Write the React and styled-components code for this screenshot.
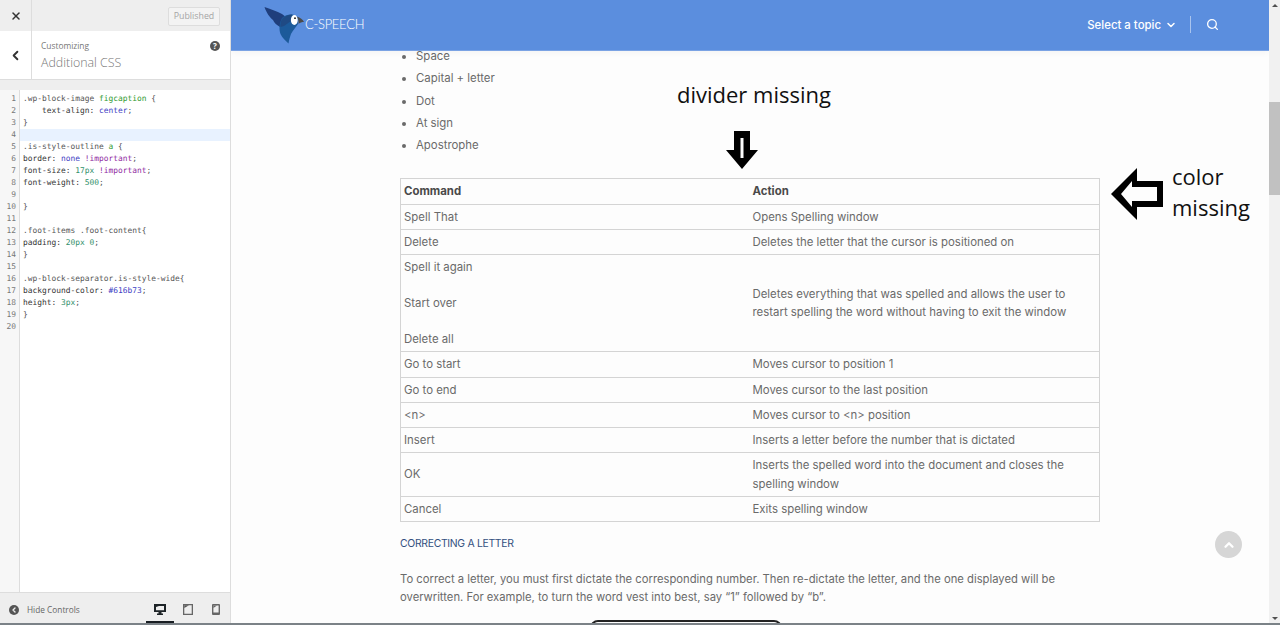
import React from "react";
import styled, { createGlobalStyle } from "styled-components";
import { X, ChevronLeft, ChevronDown, ChevronUp, Search } from "lucide-react";

const GlobalStyle = createGlobalStyle`
  html, body { margin: 0; padding: 0; height: 625px; overflow: hidden; background: #fdfdfd; }
  * { box-sizing: border-box; }
`;

const codeLines = [
  [[".wp-block-image ", "sel"], ["figcaption", "tag"], [" {", "sel"]],
  [["    text-align: ", "prop"], ["center", "kw"], [";", "sel"]],
  [["}", "sel"]],
  [],
  [[".is-style-outline ", "sel"], ["a", "tag"], [" {", "sel"]],
  [["border: ", "prop"], ["none", "kw"], [" ", "sel"], ["!important", "imp"], [";", "sel"]],
  [["font-size: ", "prop"], ["17px", "num"], [" ", "sel"], ["!important", "imp"], [";", "sel"]],
  [["font-weight: ", "prop"], ["500", "num"], [";", "sel"]],
  [],
  [["}", "sel"]],
  [],
  [[".foot-items .foot-content{", "sel"]],
  [["padding: ", "prop"], ["20px 0", "num"], [";", "sel"]],
  [["}", "sel"]],
  [],
  [[".wp-block-separator.is-style-wide{", "sel"]],
  [["background-color: ", "prop"], ["#616b73", "kw"], [";", "sel"]],
  [["height: ", "prop"], ["3px", "num"], [";", "sel"]],
  [["}", "sel"]],
  [],
];

const tokenColors = {
  sel: "#555",
  prop: "#333",
  tag: "#2f9a2f",
  kw: "#4040c4",
  num: "#2f8f6a",
  imp: "#8f2a9f",
};

const topics = ["Space", "Capital + letter", "Dot", "At sign", "Apostrophe"];

const rows = [
  { cmd: ["Spell That"], action: "Opens Spelling window" },
  { cmd: ["Delete"], action: "Deletes the letter that the cursor is positioned on" },
  {
    cmd: ["Spell it again", "Start over", "Delete all"],
    action: "Deletes everything that was spelled and allows the user to restart spelling the word without having to exit the window",
  },
  { cmd: ["Go to start"], action: "Moves cursor to position 1" },
  { cmd: ["Go to end"], action: "Moves cursor to the last position" },
  { cmd: ["<n>"], action: "Moves cursor to <n> position" },
  { cmd: ["Insert"], action: "Inserts a letter before the number that is dictated" },
  { cmd: ["OK"], action: "Inserts the spelled word into the document and closes the spelling window" },
  { cmd: ["Cancel"], action: "Exits spelling window" },
];

const Bird = () => (
  <svg width="45" height="46" viewBox="0 0 45 46" aria-hidden="true">
    <path d="M4.5 5 C10 7 17 9 22 12 L26 15 L24 24 L20 25 C17 23 14 21 13 18 C10 16 6 10 4.5 5Z" fill="#1f3e7c" />
    <path d="M22 16 C25 13 29 12 33 12.5 L37 15 L38 22 C36 25 33 28 31 32 C30 35 29 38 28.5 41.5 C26 39 22 36 20.5 32 C19 28 19 21 22 16Z" fill="#1c5a9a" />
    <path d="M22 17 C25 14 29 12.5 32 12.5 L31 19 L24 24 L20.5 25 C20 22 21 19 22 17Z" fill="#1f4a84" />
    <ellipse cx="34.3" cy="18" rx="3.4" ry="5" fill="#fff" />
    <circle cx="35" cy="16.2" r="0.9" fill="#111" />
    <path d="M37 14.5 C40 15.5 43 17.5 44 20 C42 20 40 20.5 38.5 22 C38.8 19.5 38.3 17 37 14.5Z" fill="#4b4b4b" />
  </svg>
);

const DesktopIcon = () => (
  <svg width="12" height="11" viewBox="0 0 12 11" aria-hidden="true">
    <path fillRule="evenodd" d="M0 0 H12 V8 H7.5 V9.4 H9 V11 H3 V9.4 H4.5 V8 H0Z M2 3 V6.3 H10 V2 H5Z" fill="#1d2327" />
  </svg>
);

const TabletIcon = () => (
  <svg width="10" height="11" viewBox="0 0 10 11" aria-hidden="true">
    <path fillRule="evenodd" d="M0 0 H10 V11 H0Z M1.3 1.3 V9.7 H8.7 V1.3Z" fill="#666" />
    <path d="M1.3 1.3 H6 L1.3 4Z" fill="#555" />
  </svg>
);

const PhoneIcon = () => (
  <svg width="8" height="11" viewBox="0 0 8 11" aria-hidden="true">
    <path fillRule="evenodd" d="M1 0 H7 Q8 0 8 1 V10 Q8 11 7 11 H1 Q0 11 0 10 V1 Q0 0 1 0Z M1.4 1.6 V8.4 H6.6 V1.6Z" fill="#666" />
    <path d="M1.4 1.6 H5 L1.4 4Z" fill="#666" />
  </svg>
);

const App = () => (
  <Frame>
    <GlobalStyle />
    <Window>
      <Sidebar>
        <TopBar>
          <CloseCell><X size={12} strokeWidth={3} color="#333" /></CloseCell>
          <PublishedButton>Published</PublishedButton>
        </TopBar>
        <TitleBar>
          <BackCell><ChevronLeft size={15} strokeWidth={3} color="#333" /></BackCell>
          <TitleText>
            <Customizing>Customizing</Customizing>
            <SectionTitle>Additional CSS</SectionTitle>
          </TitleText>
          <HelpDot>?</HelpDot>
        </TitleBar>
        <Strip />
        <Editor>
          <Gutter>
            {codeLines.map((_, i) => <LineNumber key={i}>{i + 1}</LineNumber>)}
          </Gutter>
          <Code>
            {codeLines.map((line, i) => (
              <CodeLine key={i} $active={i === 3}>
                {line.map(([text, type], j) => <Token key={j} $type={type}>{text}</Token>)}
              </CodeLine>
            ))}
          </Code>
        </Editor>
        <SideFooter>
          <HideControls>
            <HideIcon><ChevronLeft size={8} strokeWidth={4} color="#eee" /></HideIcon>
            Hide Controls
          </HideControls>
          <Devices>
            <DeviceCell $active><DesktopIcon /></DeviceCell>
            <DeviceCell><TabletIcon /></DeviceCell>
            <DeviceCell><PhoneIcon /></DeviceCell>
          </Devices>
        </SideFooter>
      </Sidebar>

      <Preview>
        <SiteHeader>
          <Brand>
            <Bird />
            <BrandName>C-SPEECH</BrandName>
          </Brand>
          <HeaderNav>
            <TopicSelect>Select a topic <ChevronDown size={12} strokeWidth={3} /></TopicSelect>
            <NavDivider />
            <Search size={13} strokeWidth={2.4} color="#fff" />
          </HeaderNav>
        </SiteHeader>

        <Article>
          <BulletList>
            {topics.map((t) => <li key={t}>{t}</li>)}
          </BulletList>
          <CommandTable>
            <thead>
              <tr>
                <HeadCell>Command</HeadCell>
                <HeadCell>Action</HeadCell>
              </tr>
            </thead>
            <tbody>
              {rows.map((row) => (
                <tr key={row.cmd[0]}>
                  <Cell>{row.cmd.map((c) => <CommandLine key={c}>{c}</CommandLine>)}</Cell>
                  <Cell>{row.action}</Cell>
                </tr>
              ))}
            </tbody>
          </CommandTable>
          <SubHeading>CORRECTING A LETTER</SubHeading>
          <Paragraph>
            To correct a letter, you must first dictate the corresponding number. Then re-dictate the letter, and the one displayed will be overwritten. For example, to turn the word vest into best, say “1” followed by “b”.
          </Paragraph>
          <OutlineButton />
        </Article>

        <NoteTop>divider missing</NoteTop>
        <ArrowDown width="32" height="38" viewBox="0 0 32 38">
          <path fillRule="evenodd" d="M8 0 H24 V19 H32 L16 38 L0 19 H8Z M14.5 7 V27 H17.5 V7Z" fill="#000" />
        </ArrowDown>
        <ArrowLeft width="52" height="52" viewBox="0 0 52 52">
          <path fillRule="evenodd" d="M26 0 V13 H52 V39 H26 V52 L0 26Z M21 13 L10 26 L21 39 V33 H46 V19 H21Z" fill="#000" />
        </ArrowLeft>
        <NoteSide>color<br />missing</NoteSide>
        <ScrollTop><ChevronUp size={14} strokeWidth={4} color="#fff" /></ScrollTop>
      </Preview>

      <Scrollbar>
        <ScrollArrow $dir="up" />
        <ScrollThumb />
        <ScrollArrow $dir="down" />
      </Scrollbar>
    </Window>
    <BottomEdge />
  </Frame>
);

const Frame = styled.div`
  width: 1280px;
  height: 625px;
  display: flex;
  flex-direction: column;
  overflow: hidden;
`;

const Window = styled.div`
  flex: 1;
  min-height: 0;
  display: flex;
`;

const BottomEdge = styled.div`
  height: 2px;
  background: #7b8287;
`;

const Sidebar = styled.aside`
  width: 231px;
  flex-shrink: 0;
  display: flex;
  flex-direction: column;
  background: #eee;
  border-right: 1px solid #ddd;
  font-family: "Open Sans", sans-serif;
`;

const TopBar = styled.div`
  height: 31px;
  display: flex;
  align-items: center;
  justify-content: space-between;
  padding-right: 10px;
  flex-shrink: 0;
`;

const CloseCell = styled.div`
  width: 32px;
  height: 31px;
  display: flex;
  align-items: center;
  justify-content: center;
  border-right: 1px solid #ddd;
`;

const PublishedButton = styled.div`
  width: 52px;
  height: 19px;
  margin-top: 1px;
  display: flex;
  align-items: center;
  justify-content: center;
  border: 1px solid #ddd;
  border-radius: 2px;
  background: #f3f3f3;
  color: #a5a5a5;
  font-size: 8.8px;
`;

const TitleBar = styled.div`
  height: 49px;
  flex-shrink: 0;
  display: flex;
  align-items: center;
  background: #fff;
  border-bottom: 1px solid #ddd;
  padding-right: 10px;
`;

const BackCell = styled.div`
  width: 32px;
  height: 100%;
  display: flex;
  align-items: center;
  justify-content: center;
  border-right: 1px solid #ddd;
  flex-shrink: 0;
`;

const TitleText = styled.div`
  flex: 1;
  padding: 3px 0 0 9px;
  display: flex;
  flex-direction: column;
`;

const Customizing = styled.div`
  font-size: 8.4px;
  line-height: 12px;
  color: #777;
`;

const SectionTitle = styled.div`
  font-size: 12.4px;
  line-height: 20px;
  margin-top: 1px;
  font-weight: 300;
  color: #777;
`;

const HelpDot = styled.div`
  width: 10px;
  height: 10px;
  margin-top: -18px;
  border-radius: 50%;
  background: #555;
  color: #fff;
  font-size: 8px;
  font-weight: 700;
  line-height: 10px;
  text-align: center;
`;

const Strip = styled.div`
  height: 10px;
  flex-shrink: 0;
`;

const Editor = styled.div`
  flex: 1;
  min-height: 0;
  display: flex;
  background: #fff;
  font-family: "DejaVu Sans Mono", monospace;
  font-size: 7.9px;
  line-height: 12px;
`;

const Gutter = styled.div`
  width: 20px;
  padding: 3px 3px 0 0;
  background: #f7f7f7;
  border-right: 1px solid #ddd;
  flex-shrink: 0;
`;

const LineNumber = styled.div`
  height: 12px;
  text-align: right;
  color: #777;
`;

const Code = styled.div`
  flex: 1;
  padding-top: 3px;
`;

const CodeLine = styled.div`
  height: 12px;
  padding-left: 3px;
  white-space: pre;
  background: ${({ $active }) => ($active ? "#e8f2ff" : "transparent")};
`;

const Token = styled.span`
  color: ${({ $type }) => tokenColors[$type]};
`;

const SideFooter = styled.div`
  height: 31px;
  flex-shrink: 0;
  display: flex;
  align-items: center;
  justify-content: space-between;
  border-top: 1px solid #ddd;
  padding-left: 9px;
`;

const HideControls = styled.div`
  display: flex;
  align-items: center;
  gap: 8px;
  margin-top: 3px;
  font-size: 8.3px;
  color: #666;
`;

const HideIcon = styled.span`
  width: 10px;
  height: 10px;
  border-radius: 50%;
  background: #555;
  display: flex;
  align-items: center;
  justify-content: center;
`;

const Devices = styled.div`
  display: flex;
  height: 100%;
`;

const DeviceCell = styled.div`
  width: 28px;
  height: 100%;
  padding-top: 5px;
  display: flex;
  align-items: center;
  justify-content: center;
  border-bottom: 2px solid ${({ $active }) => ($active ? "#191e23" : "transparent")};
`;

const Preview = styled.main`
  flex: 1;
  min-width: 0;
  position: relative;
  overflow: hidden;
  background: #fdfdfd;
  font-family: "Inter", sans-serif;
  color: #6a6a6a;
`;

const SiteHeader = styled.header`
  position: relative;
  z-index: 2;
  height: 51px;
  display: flex;
  align-items: center;
  justify-content: space-between;
  padding: 0 50px 0 29px;
  background: #5b8ede;
  border-bottom: 1px solid #7ba3e4;
  box-shadow: 0 2px 6px rgba(0, 0, 0, 0.04);
`;

const Brand = styled.div`
  display: flex;
  align-items: center;
  margin-top: -1px;
`;

const BrandName = styled.span`
  font-family: "Lato", sans-serif;
  font-weight: 300;
  font-size: 13px;
  letter-spacing: -0.3px;
  margin-top: -1px;
  color: #fff;
`;

const HeaderNav = styled.div`
  display: flex;
  align-items: center;
  color: #fff;
  margin-top: -1px;
`;

const TopicSelect = styled.div`
  display: flex;
  align-items: center;
  gap: 4px;
  margin-right: 13px;
  font-size: 11.4px;
  font-weight: 500;
`;

const NavDivider = styled.div`
  width: 1px;
  height: 17px;
  margin-right: 15px;
  background: #a9c4ee;
`;

const Article = styled.article`
  width: 700px;
  margin: -6px 0 0 169px;
`;

const BulletList = styled.ul`
  margin: 0 0 22px;
  padding: 0 0 0 16px;
  font-size: 11.4px;
  line-height: 22.25px;
`;

const CommandTable = styled.table`
  width: 700px;
  table-layout: fixed;
  border-collapse: collapse;
  font-size: 11.4px;
  line-height: 18.25px;
`;

const HeadCell = styled.th`
  padding: 3px;
  border-top: 1px solid #d4d4d4;
  border-bottom: 1px solid #d4d4d4;
  text-align: left;
  font-weight: 700;
  color: #4a4a4a;
  &:first-child { width: 349px; border-left: 1px solid #d4d4d4; }
  &:last-child { border-right: 1px solid #d4d4d4; }
`;

const Cell = styled.td`
  padding: 3px;
  border-top: 1px solid #d4d4d4;
  border-bottom: 1px solid #d4d4d4;
  &:first-child { border-left: 1px solid #d4d4d4; }
  &:last-child { border-right: 1px solid #d4d4d4; }
`;

const CommandLine = styled.div`
  & + & { margin-top: 17.75px; }
`;

const SubHeading = styled.h4`
  margin: 13px 0 0;
  font-size: 10.4px;
  letter-spacing: -0.3px;
  line-height: 18px;
  font-weight: 400;
  color: #33507f;
`;

const Paragraph = styled.p`
  margin: 17px 0 0;
  font-size: 11.25px;
  line-height: 18px;
`;

const OutlineButton = styled.div`
  width: 192px;
  height: 40px;
  margin: 14px 0 0 190px;
  border: 2px solid #222;
  border-radius: 8px;
`;

const NoteTop = styled.div`
  position: absolute;
  left: 446px;
  top: 78px;
  font-family: "Open Sans", sans-serif;
  font-size: 22px;
  line-height: 32px;
  color: #111;
  white-space: nowrap;
`;

const NoteSide = styled.div`
  position: absolute;
  left: 941px;
  top: 161px;
  font-family: "Open Sans", sans-serif;
  font-size: 22px;
  line-height: 31px;
  color: #111;
`;

const ArrowDown = styled.svg`
  position: absolute;
  left: 495px;
  top: 131px;
`;

const ArrowLeft = styled.svg`
  position: absolute;
  left: 880px;
  top: 168px;
`;

const ScrollTop = styled.div`
  position: absolute;
  left: 984px;
  top: 531px;
  width: 27px;
  height: 27px;
  border-radius: 50%;
  background: #d6d6d6;
  display: flex;
  align-items: center;
  justify-content: center;
`;

const Scrollbar = styled.div`
  width: 11px;
  flex-shrink: 0;
  display: flex;
  flex-direction: column;
  align-items: center;
  background: #f1f1f1;
  position: relative;
`;

const ScrollArrow = styled.div`
  position: absolute;
  ${({ $dir }) => ($dir === "up" ? "top: 4px;" : "bottom: 3px;")}
  width: 0;
  height: 0;
  border-left: 3px solid transparent;
  border-right: 3px solid transparent;
  ${({ $dir }) => ($dir === "up" ? "border-bottom: 3px solid #505050;" : "border-top: 3px solid #505050;")}
`;

const ScrollThumb = styled.div`
  width: 100%;
  height: 93px;
  margin-top: 102px;
  background: #c1c1c1;
`;

export default App;
